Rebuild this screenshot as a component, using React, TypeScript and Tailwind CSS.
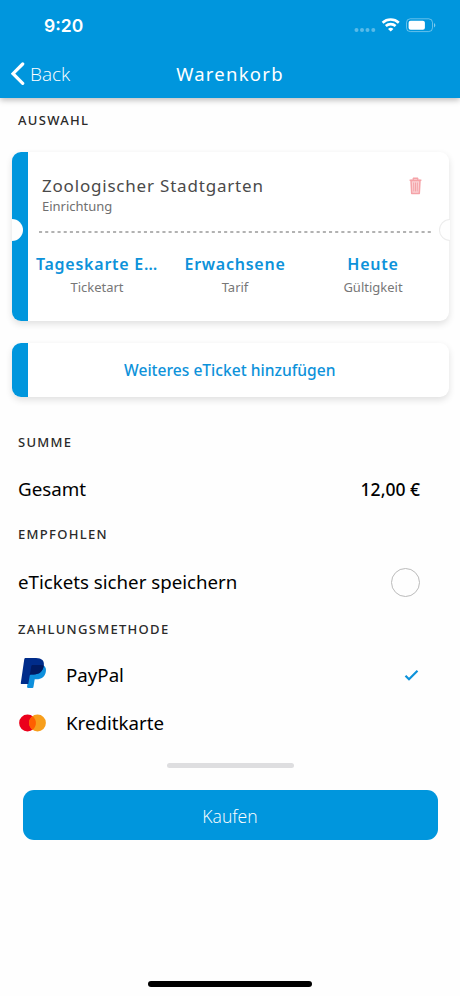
import { useState } from "react";
import type { ReactNode } from "react";

interface TicketDetail {
  value: string;
  label: string;
}

const details: TicketDetail[] = [
  { value: "Tageskarte E…", label: "Ticketart" },
  { value: "Erwachsene", label: "Tarif" },
  { value: "Heute", label: "Gültigkeit" },
];

function StatusBar() {
  return (
    <div className="flex h-[50px] items-center justify-between pl-[44px] pr-[24px]">
      <span className="pt-px font-['Inter',sans-serif] text-[17.5px] font-semibold leading-5">9:20</span>
      <svg width="82" height="16" viewBox="0 0 82 16" fill="none">
        <g fill="#fff" opacity="0.35">
          <circle cx="2.5" cy="13" r="2" />
          <circle cx="8" cy="13" r="2" />
          <circle cx="13.5" cy="13" r="2" />
          <circle cx="19.3" cy="13" r="2" />
        </g>
        <g stroke="#fff" strokeWidth="2.6">
          <path d="M28.6 5.7a12 12 0 0 1 16.2 0" />
          <path d="M31.8 9a7.2 7.2 0 0 1 9.8 0" />
        </g>
        <path d="M36.7 14.6 34 11.9a4 4 0 0 1 5.4 0Z" fill="#fff" />
        <rect x="52.5" y="1.8" width="26" height="12.8" rx="3.8" stroke="#fff" strokeOpacity="0.4" />
        <rect x="54.6" y="3.8" width="16.3" height="8.9" rx="2" fill="#fff" />
        <path d="M80 6v4.4c1.8-.8 1.8-3.6 0-4.4Z" fill="#fff" opacity="0.5" />
      </svg>
    </div>
  );
}

function SectionTitle({ children }: { children: ReactNode }) {
  return (
    <h2 className="text-[13px] font-medium uppercase leading-[18px] tracking-[1.3px] text-[#2a2a2a]">{children}</h2>
  );
}

function TrashIcon() {
  return (
    <svg width="13" height="18" viewBox="0 0 13 18" fill="none" stroke="#f5a3a8">
      <path d="M2 3.5h9l-.7 13H2.7Z" fill="#fad2d5" strokeWidth="1.5" strokeLinejoin="round" />
      <path d="M.6 3.2h11.8M4 2.4l.6-1.2h3.8L9 2.4" strokeWidth="1.5" />
      <path d="M4.600 5.500l.2 9M6.500 5.500v9M8.400 5.500l-.2 9" strokeWidth="1" />
    </svg>
  );
}

function PayPalIcon() {
  return (
    <svg width="27" height="32" viewBox="0 0 27 32">
      <path d="M23.8 8.6c1.9 1.4 2.6 3.5 2 6.3-1 5-4.4 7.3-9.2 7.3h-1.9l-1.3 8c-.1.5-.5.8-1 .8H7.7c-.5 0-.8-.4-.7-.9L9.5 14Z" fill="#0d8fdc" />
      <path d="M5.6 1h10.5c5.6 0 8.6 2.8 7.7 7.6-1 6.1-4.5 8.9-10 8.9h-2.7c-.8 0-1.3.4-1.4 1.2l-1.4 8.2H1.6c-.6 0-.9-.4-.8-1L4.3 2.1C4.4 1.4 4.9 1 5.6 1Z" fill="#002c8a" />
      <path d="M23.8 8.6c-1 6.1-4.5 8.9-10 8.9h-2.7c-.8 0-1.3.4-1.4 1.2l1.6-9.7c.1-.7.6-1.1 1.3-1.1h7.7c1.5 0 2.7.2 3.5.7Z" fill="#001b62" />
    </svg>
  );
}

function MastercardIcon() {
  return (
    <svg width="27" height="18" viewBox="0 0 27 18">
      <circle cx="8.5" cy="9" r="8.4" fill="#eb001b" />
      <circle cx="18.5" cy="9" r="8.4" fill="#f79e1b" />
      <path d="M13.5 2.25a8.4 8.4 0 0 1 0 13.5a8.4 8.4 0 0 1 0-13.5Z" fill="#ff5f00" />
    </svg>
  );
}

export default function App() {
  const [saveTickets, setSaveTickets] = useState(false);
  const [payment, setPayment] = useState("paypal");

  return (
    <div className="flex h-[996px] w-[460px] flex-col overflow-hidden bg-[#fefefe] font-['Noto_Sans',sans-serif] text-black">
      <header className="h-[98px] shrink-0 bg-[#0096dd] text-white shadow-[0_2px_6px_rgba(0,0,0,0.28)]">
        <StatusBar />
        <nav className="grid h-[48px] grid-cols-3 items-center">
          <button className="flex items-center gap-[5px] pl-[11px] font-['Open_Sans',sans-serif] text-[19px] font-[350] leading-6">
            <svg width="14" height="24" viewBox="0 0 14 24" fill="none" stroke="#fff" strokeWidth="3.2" strokeLinecap="round">
              <path d="M11.7 2 2 11.7l9.7 9.7" />
            </svg>
            Back
          </button>
          <h1 className="text-center text-[18.5px] leading-6 tracking-[1.25px]">Warenkorb</h1>
        </nav>
      </header>

      <main className="flex flex-col">
        <div className="pl-[18px] pt-[13px]">
          <SectionTitle>Auswahl</SectionTitle>
        </div>

        <article className="relative mx-[11.5px] mt-[23px] flex h-[169px] rounded-[9px] bg-white shadow-[0_3px_7px_rgba(0,0,0,0.12)]">
          <div className="w-[16.5px] shrink-0 rounded-l-[9px] bg-[#0096dd]" />
          <div className="min-w-0 flex-1 pr-[6.5px]">
            <div className="flex h-[79px] items-start justify-between pl-[14px] pr-[20px] pt-[22px]">
              <div>
                <h3 className="text-[17px] leading-6 tracking-[0.8px] text-[#4a4a4a]">Zoologischer Stadtgarten</h3>
                <p className="-mt-px text-[13px] leading-[18px] text-[#707070]">Einrichtung</p>
              </div>
              <button aria-label="Löschen" className="mt-[3px]">
                <TrashIcon />
              </button>
            </div>
            <svg className="ml-[11px] block" width="394" height="2" viewBox="0 0 394 2">
              <path d="M0 1h394" stroke="#999" strokeWidth="1.5" strokeDasharray="3.1 3.07" />
            </svg>
            <div className="grid grid-cols-3 pt-[19px] text-center">
              {details.map((d) => (
                <div key={d.label}>
                  <div className="whitespace-nowrap text-[16px] font-semibold leading-6 tracking-[0.75px] text-[#0d92da]">
                    {d.value}
                  </div>
                  <div className="mt-[2px] text-[13px] leading-[18px] text-[#777]">{d.label}</div>
                </div>
              ))}
            </div>
          </div>
          {/* ticket punch holes */}
          <span className="absolute left-0 top-[66.5px] h-[22px] w-[11px] rounded-r-full bg-[#fefefe]" />
          <span className="absolute -right-px top-[66.5px] h-[22px] w-[11px] rounded-l-full border border-r-0 border-[#ececec] bg-[#fefefe]" />
        </article>

        <button className="mx-[11.5px] mt-[22px] flex h-[54px] rounded-[9px] bg-white shadow-[0_3px_7px_rgba(0,0,0,0.12)]">
          <span className="h-full w-[16.5px] shrink-0 rounded-l-[9px] bg-[#0096dd]" />
          <span className="flex h-full flex-1 items-center justify-center pr-[17px] pt-px text-[15.6px] font-medium text-[#0d92da]">
            Weiteres eTicket hinzufügen
          </span>
        </button>

        <section className="pl-[18px] pr-[40px] pt-[36px]">
          <SectionTitle>Summe</SectionTitle>
          <div className="mt-[24px] flex h-[28px] items-center justify-between text-[18.8px]">
            <span>Gesamt</span>
            <span className="text-[17.5px] font-medium">12,00 €</span>
          </div>
        </section>

        <section className="pl-[18px] pr-[40px] pt-[22px]">
          <SectionTitle>Empfohlen</SectionTitle>
          <div className="mt-[24px] flex h-[30px] items-center justify-between text-[18.7px]">
            <span>eTickets sicher speichern</span>
            <button
              role="checkbox"
              aria-checked={saveTickets}
              onClick={() => setSaveTickets(!saveTickets)}
              className={`size-[29px] rounded-full border ${saveTickets ? "border-[#0096dd] bg-[#0096dd]" : "border-[#bbb]"}`}
            />
          </div>
        </section>

        <section className="pl-[18px] pr-[40px] pt-[23px]">
          <SectionTitle>Zahlungsmethode</SectionTitle>
          <div className="mt-[13px] text-[18.7px]">
            <button onClick={() => setPayment("paypal")} className="flex h-[48px] w-full items-center">
              <span className="w-[48px] pb-[4px] pl-[2px]">
                <PayPalIcon />
              </span>
              PayPal
              {payment === "paypal" && (
                <svg className="ml-auto mr-px" width="15" height="13" viewBox="0 0 15 13" fill="none">
                  <path d="M1.5 6.8 5 10.3 13.5 1.8" stroke="#0d92da" strokeWidth="2.2" />
                </svg>
              )}
            </button>
            <button onClick={() => setPayment("card")} className="flex h-[49px] w-full items-center">
              <span className="w-[48px] pb-[2px] pl-px">
                <MastercardIcon />
              </span>
              Kreditkarte
            </button>
          </div>
        </section>
      </main>

      <footer className="flex flex-1 flex-col items-center pt-[15px]">
        <div className="h-[5px] w-[127px] rounded-full bg-[#dedee0]" />
        <button className="mt-[22px] h-[50px] w-[415px] rounded-[11px] bg-[#0096dd] pt-[2px] font-['Open_Sans',sans-serif] text-[17.6px] font-[350] text-white">
          Kaufen
        </button>
        <div className="mb-[9px] mt-auto h-[6px] w-[164px] rounded-full bg-black" />
      </footer>
    </div>
  );
}
